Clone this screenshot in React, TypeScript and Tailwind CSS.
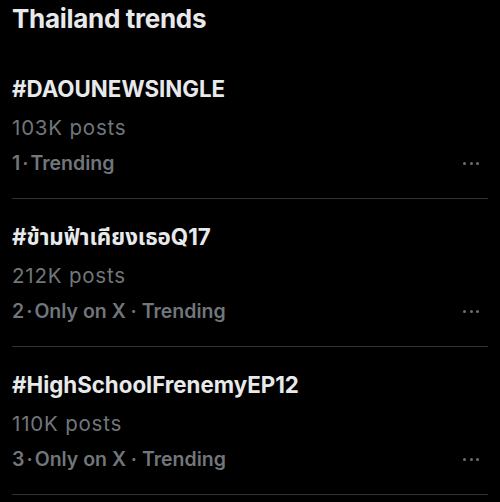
import React from "react";

const trends = [
  { tag: "#DAOUNEWSINGLE", posts: "103K posts", rank: "1", meta: "Trending" },
  { tag: "#ข้ามฟ้าเคียงเธอQ17", posts: "212K posts", rank: "2", meta: "Only on X · Trending" },
  { tag: "#HighSchoolFrenemyEP12", posts: "110K posts", rank: "3", meta: "Only on X · Trending" },
];

function Dots() {
  return (
    <div className="flex w-[34px] items-center justify-center gap-[3.5px]">
      <span className="h-[3px] w-[3px] rounded-full bg-[#6b7075]" />
      <span className="h-[3px] w-[3px] rounded-full bg-[#6b7075]" />
      <span className="h-[3px] w-[3px] rounded-full bg-[#6b7075]" />
    </div>
  );
}

export default function App() {
  return (
    <div
      className="h-[502px] w-[500px] overflow-hidden bg-black px-3 text-[#e7e9ea]"
      style={{ fontFamily: 'Inter, "Noto Sans", "Noto Sans Thai", "DejaVu Sans", sans-serif' }}
    >
      <div className="pb-[16px] pt-[3px] text-[26px] font-bold leading-[32px] tracking-[-0.3px]">
        Thailand trends
      </div>
      {trends.map((t) => (
        <div key={t.tag} className="border-b border-[#2f3336] pb-[21px] pt-[24px]">
          <div className="text-[22.3px] font-bold leading-[28px]">{t.tag}</div>
          <div className="mt-[11px] text-[20.5px] leading-[28px] tracking-[0.8px] text-[#71767b]">
            {t.posts}
          </div>
          <div className="mt-[7px] flex items-center justify-between">
            <span className="text-[19.5px] font-semibold leading-[28px] text-[#71767b]">
              {t.rank}
              <span className="mx-[2px]">·</span>
              {t.meta}
            </span>
            <Dots />
          </div>
        </div>
      ))}
    </div>
  );
}
